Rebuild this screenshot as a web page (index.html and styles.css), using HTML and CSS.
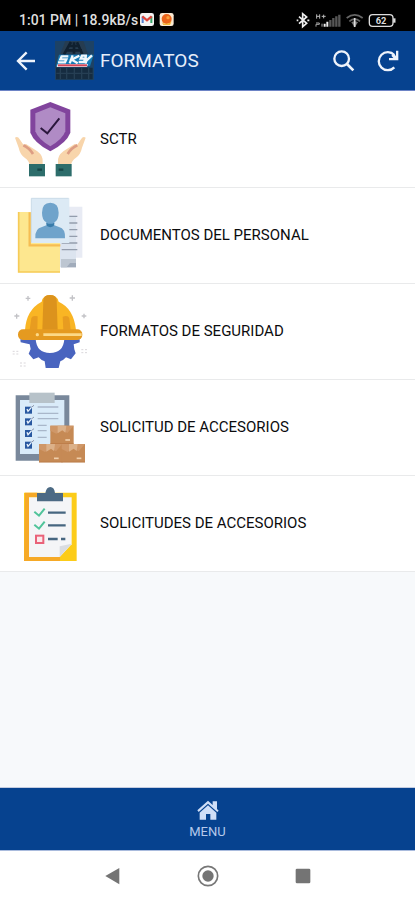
FILE: index.html
```html
<!DOCTYPE html>
<html lang="es">
<head>
<meta charset="utf-8">
<meta name="viewport" content="width=device-width, initial-scale=1">
<title>Formatos</title>
<link rel="stylesheet" href="styles.css">
</head>
<body>
<div class="app">
  <div class="status">
    <span class="status-text">1:01 PM | 18.9kB/s</span>
    <svg class="notices" viewBox="420 33 108 51" aria-hidden="true">
      <rect x="423" y="39" width="42" height="39" rx="7" fill="#f4f2f2"/>
      <path d="M431 69V49" stroke="#517fd0" stroke-width="6"/>
      <path d="M457 69V49" stroke="#39a668" stroke-width="6"/>
      <path d="M430 49l14 12 14-12" fill="none" stroke="#dc453b" stroke-width="7"/>
      <rect x="482" y="39" width="42" height="39" rx="7" fill="#fae9d3"/>
      <circle cx="503" cy="57" r="15" fill="#e9641b"/>
      <path d="M488 66q14 12 30-2l-5 11h-20z" fill="#f5b631"/>
      <circle cx="507" cy="53" r="5" fill="#f9a03a"/>
    </svg>
    <svg class="signals" viewBox="267 30 306 54" aria-hidden="true">
      <path d="M279 47l23 20-12 10V38l12 10-23 20" fill="none" stroke="#eee" stroke-width="5"/>
      <path d="M272 58h5M304 58h6" stroke="#eee" stroke-width="5"/>
      <path d="M332 40v13M341 40v13M332 46h9M347 46h12M353 41v11" stroke="#bbb" stroke-width="3" fill="none"/>
      <path d="M330 66h10v4h-10v7M348 68v9" stroke="#aaa" stroke-width="3" fill="none"/>
      <path d="M356 77V68M364 77V62" stroke="#eee" stroke-width="6"/>
      <path d="M373 77V57M382 77V51M391 77V46M400 77V41" stroke="#565656" stroke-width="7"/>
      <path d="M422 51q24-19 48 0M430 61q16-13 32 0" fill="none" stroke="#666" stroke-width="5"/>
      <path d="M436 64q10-7 20 0l-10 15z" fill="#777"/>
      <path d="M446 51v27" stroke="#ddd" stroke-width="5"/>
      <rect x="490" y="41" width="71" height="35" rx="10" fill="none" stroke="#ddd" stroke-width="4"/>
      <path d="M565 52v13" stroke="#ddd" stroke-width="7"/>
      <text x="525" y="68" text-anchor="middle" class="battery">62</text>
    </svg>
  </div>

  <header class="bar">
    <button class="icon-btn" type="button" aria-label="Volver">
      <svg viewBox="0 0 72 72"><path d="M63 36H12M38 10L12 36l26 26" fill="none" stroke="#eef3fb" stroke-width="7"/></svg>
    </button>
    <svg class="logo" viewBox="0 0 117 117" aria-hidden="true">
      <rect width="117" height="117" fill="#1d4265"/>
      <path d="M31 0h54l14 39H16z" fill="#263c50"/>
      <path d="M48 3L27 40M57 4v34M66 4l16 36M40 15h35M31 28h50" stroke="#10202f" stroke-width="8"/>
      <path d="M3 80h110v35H3z" fill="#162c40"/>
      <path d="M16 80v35M35 80v34M58 80v35M80 80v34M101 80v35M4 97h109" stroke="#263f54" stroke-width="4"/>
      <path d="M12 41h104l-11 35H3z" fill="#1579b4"/>
      <path d="M40 46H20l-4 9h18l-4 9H9M53 43l-9 24M73 44L50 56l18 11M96 44H81l-4 9h13l-3 10H71M91 45l3 14 17-16M95 58l-4 10" fill="none" stroke="#f0f7fb" stroke-width="7"/>
      <path d="M8 69h91l-3 9H5z" fill="#e9e9ee"/>
      <path d="M9 73h87" stroke="#d34255" stroke-width="6"/>
    </svg>
    <h1>FORMATOS</h1>
    <button class="icon-btn" type="button" aria-label="Buscar">
      <svg viewBox="0 0 72 72"><circle cx="29" cy="29" r="22" fill="none" stroke="#eef3fb" stroke-width="7"/><path d="M45 45l19 19" stroke="#eef3fb" stroke-width="8"/></svg>
    </button>
    <button class="icon-btn reload" type="button" aria-label="Actualizar">
      <svg viewBox="0 0 72 72"><path d="M55 55A27 27 0 1 1 55 18" fill="none" stroke="#eef3fb" stroke-width="7"/><path d="M60 5h7v29H39v-7h13l-6-7 7-6 7 7z" fill="#eef3fb"/></svg>
    </button>
  </header>

  <main>
    <ul class="list">
      <li><a class="row" href="#sctr">
        <svg class="pic" viewBox="36 33 228 228" aria-hidden="true">
          <path d="M151 36l60 23v69q-11 30-60 56-49-26-60-56V59z" fill="#81449d"/>
          <path d="M151 52l45 18v54q-8 23-45 45-37-22-45-45V70z" fill="#b08bc5"/>
          <path d="M122 114l20 16 36-45" fill="none" stroke="#2b173d" stroke-width="6"/>
          <g id="hand">
            <path d="M45 143q8-6 14 5l16 23q-6-9 3-9l34 22q19 14 16 34v7H89q-2-14-15-22-14-10-18-30z" fill="#f8d5ab"/>
            <path d="M70 166q18 8 29 26" fill="none" stroke="#dd9d83" stroke-width="8"/>
            <path d="M87 222h48v37H87z" fill="#2d6d6b"/>
            <path d="M112 239h14" stroke="#174748" stroke-width="7"/>
          </g>
          <use href="#hand" transform="matrix(-1 0 0 1 302 0)"/>
        </svg>
        <span>SCTR</span></a></li>
      <li><a class="row" href="#documentos">
        <svg class="pic" viewBox="36 36 228 228" aria-hidden="true">
          <path d="M186 65h61v153h-61z" fill="#e8ebf4"/>
          <path d="M178 92h50v155h-50z" fill="#dce4ef"/>
          <path d="M207 94h25M207 114h25M207 134h25M207 154h25M185 174h47M185 194h47" stroke="#949dad" stroke-width="4"/>
          <path d="M183 222h45v25h-45z" fill="#a1acbb"/>
          <path d="M183 222h45v12h-18l-10 13h-17z" fill="#bdc6d1"/>
          <path d="M54 81h48v80h78v101H54z" fill="#fde78f"/>
          <path d="M56 81v180h124" fill="none" stroke="#f6cb58" stroke-width="5"/>
          <path d="M89 82v99h92" fill="none" stroke="#f6bd53" stroke-width="7"/>
          <path d="M94 40h114v134H94z" fill="#dceaf5"/>
          <path d="M94 172V40h112" fill="none" stroke="#cbdbe8" stroke-width="3"/>
          <path d="M106 160q-2-30 20-34l13-5v-9q-13-7-13-29 0-30 25-30t25 30q0 22-13 29v9l14 5q20 5 18 34z" fill="#6fa3cb"/>
          <path d="M139 113q12 7 24 0l-2 10q-10 7-20 0z" fill="#397caa"/>
        </svg>
        <span>DOCUMENTOS DEL PERSONAL</span></a></li>
      <li><a class="row" href="#seguridad">
        <svg class="pic" viewBox="36 33 228 228" aria-hidden="true">
          <path d="M77 49h14M84 42v14M209 48h16M217 40v16M43 102h15M50 95v15M245 102h14M252 95v14" stroke="#c2c2c6" stroke-width="4"/>
          <path d="M38 208h21M38 216h21M60 243h21M60 252h21M244 203h18M244 212h18" stroke="#dad7db" stroke-width="3" stroke-dasharray="6 5"/>
          <path d="M61 172h46q3 41 43 41t43-41h46v9l-18 6 2 15 4 12-14 18-15-6-9 8-8 4-5 20h-39l-3-20-9-4-9-8-16 6-14-17 6-14-3-14-27-6z" fill="#4964bf"/>
          <path d="M75 144q4-61 50-85 4-20 25-20t26 20q45 20 52 85z" fill="#f9b524"/>
          <path d="M127 144l3-89q1-16 20-16t20 16l3 89z" fill="#dc931d"/>
          <path d="M89 144l5-36q3-9 19-5l-1 41zM190 144l-2-40q17-5 20 5l4 35z" fill="#e89c20"/>
          <rect x="54" y="142" width="193" height="32" rx="15" fill="#e59a20"/>
          <path d="M130 158h115" stroke="#fcd987" stroke-width="8"/>
          <circle cx="112" cy="158" r="5" fill="#fcd987"/>
        </svg>
        <span>FORMATOS DE SEGURIDAD</span></a></li>
      <li><a class="row" href="#solicitud">
        <svg class="pic" viewBox="36 33 228 228" aria-hidden="true">
          <path d="M47 52h161v196H47z" fill="#79889b"/>
          <path d="M60 66h133v162H60z" fill="#d9ebf9"/>
          <path d="M88 44h76v31H88z" fill="#b7c2c9"/>
          <path d="M113 87h62M113 106h62M113 122h62M113 142h27M113 158h27M113 178h27" stroke="#a9b7ca" stroke-width="4"/>
          <g id="tick">
            <path d="M75 86h21v21H75z" fill="#2858a0"/>
            <path d="M81 93l3 7 15-17" fill="none" stroke="#e8f2fc" stroke-width="4"/>
            <path d="M94 88l8-6" stroke="#8793a9" stroke-width="3"/>
          </g>
          <use href="#tick" y="35"/><use href="#tick" y="70"/><use href="#tick" y="105"/>
          <g id="box">
            <path d="M151 143h70v55h-70z" fill="#c68a55"/>
            <path d="M151 143h70l-19 22-16-9-17 11-18-9z" fill="#cf9768"/>
            <path d="M173 143h26l-3 21-9-7-14 9z" fill="#dcb189"/>
            <path d="M196 186h14" stroke="#f0cfab" stroke-width="5"/>
            <path d="M151 197h70" stroke="#b67643" stroke-width="2"/>
          </g>
          <use href="#box" x="-34" y="55"/><use href="#box" x="34" y="55"/>
        </svg>
        <span>SOLICITUD DE ACCESORIOS</span></a></li>
      <li><a class="row" href="#solicitudes">
        <svg class="pic" viewBox="36 33 228 228" aria-hidden="true">
          <path d="M72 56h158v206H72z" fill="#fccc19"/>
          <path d="M75 56h37v14H87v179h93v13H72z" fill="#f6a927"/>
          <path d="M87 70h128v141l-36 38H87z" fill="#f4f5f7"/>
          <path d="M179 217l36-8-36 40z" fill="#d9dce1"/>
          <path d="M111 57h25q3-18 15-18t14 18h24v25h-78z" fill="#4c6a84"/>
          <path d="M103 113l14 12 17-21M103 152l14 12 17-21" fill="none" stroke="#50c49a" stroke-width="6"/>
          <path d="M144 116h53M144 154h53M144 195h29M183 195h13" stroke="#466680" stroke-width="7"/>
          <rect x="108" y="185" width="22" height="22" fill="#fbe8eb" stroke="#e96279" stroke-width="6"/>
        </svg>
        <span>SOLICITUDES DE ACCESORIOS</span></a></li>
    </ul>
  </main>

  <nav class="tabs">
    <a class="tab" href="#menu">
      <svg viewBox="0 0 66 60" aria-hidden="true"><path d="M1 31L33 2l14 13V4h13v23l5 5-4 4L33 11 5 36z" fill="#cfdef7"/><path d="M8 38l25-22 25 22v21H40V42H27v17H8z" fill="#cfdef7"/></svg>
      <span>MENU</span>
    </a>
  </nav>
  <div class="system">
    <button type="button" aria-label="Atrás"><svg viewBox="0 0 66 66"><path d="M10 33L52 9v49z" fill="#747474"/></svg></button>
    <button type="button" aria-label="Inicio"><svg viewBox="0 0 66 66"><circle cx="33" cy="33" r="29" fill="none" stroke="#777" stroke-width="5"/><circle cx="33" cy="33" r="17" fill="#747474"/></svg></button>
    <button type="button" aria-label="Recientes"><svg viewBox="0 0 66 66"><rect x="11" y="11" width="44" height="44" rx="4" fill="#747474"/></svg></button>
  </div>
</div>
</body>
</html>
```
FILE: styles.css
```css
* {
  box-sizing: border-box;
}

body {
  margin: 0;
  font-family: Roboto, "Liberation Sans", sans-serif;
  color: #0c0c0e;
  background: #f7f9fb;
}

svg {
  display: block;
}

button {
  padding: 0;
  border: 0;
  background: none;
}

a {
  color: inherit;
  text-decoration: none;
}

.app {
  display: flex;
  flex-direction: column;
  min-height: 100vh;
}

.status {
  display: flex;
  align-items: center;
  height: 31px;
  padding: 8px 18px 0 19px;
  background: #000;
  color: #dedede;
}

.status-text {
  font-size: 14px;
  font-weight: 500;
  white-space: nowrap;
}

.notices {
  width: 36px;
  height: 17px;
  margin-left: 1px;
}

.signals {
  width: 102px;
  height: 18px;
  margin-left: auto;
}

.battery {
  fill: #ddd;
  font-size: 28px;
  font-weight: 700;
}

.bar {
  display: flex;
  align-items: center;
  height: 60px;
  padding: 0 15px 0 14px;
  background: #06428f;
  border-bottom: 1px solid #6d84c6;
}

.bar h1 {
  flex: 1;
  margin: 0 0 0 6px;
  font-size: 19px;
  font-weight: 400;
  color: #e6eefa;
}

.icon-btn svg {
  width: 24px;
  height: 24px;
}

.logo {
  width: 39px;
  height: 39px;
  margin-left: 17px;
}

.reload {
  margin-left: 20px;
}

main {
  flex: 1;
}

.list {
  margin: 0;
  padding: 1px 0 0;
  list-style: none;
  background: #fff;
}

.row {
  display: flex;
  align-items: center;
  gap: 12px;
  padding: 9px 12px 10px;
  border-bottom: 1px solid #e9eaeb;
  font-size: 15px;
  font-weight: 400;
}

.pic {
  flex: none;
  width: 76px;
  height: 76px;
}

.tabs {
  display: flex;
  height: 64px;
  border-top: 1px solid #c3cce0;
  border-bottom: 1px solid #a9bbdd;
  background: #06428f;
}

.tab {
  flex: 1;
  display: flex;
  flex-direction: column;
  align-items: center;
  justify-content: center;
  gap: 4px;
  padding-top: 2px;
  font-size: 13px;
  line-height: 16px;
  color: #b5c9eb;
}

.tab svg {
  width: 22px;
  height: 20px;
}

.system {
  display: flex;
  justify-content: center;
  gap: 73px;
  height: 49px;
  align-items: center;
  background: #fff;
}

.system svg {
  width: 22px;
  height: 22px;
}
```
